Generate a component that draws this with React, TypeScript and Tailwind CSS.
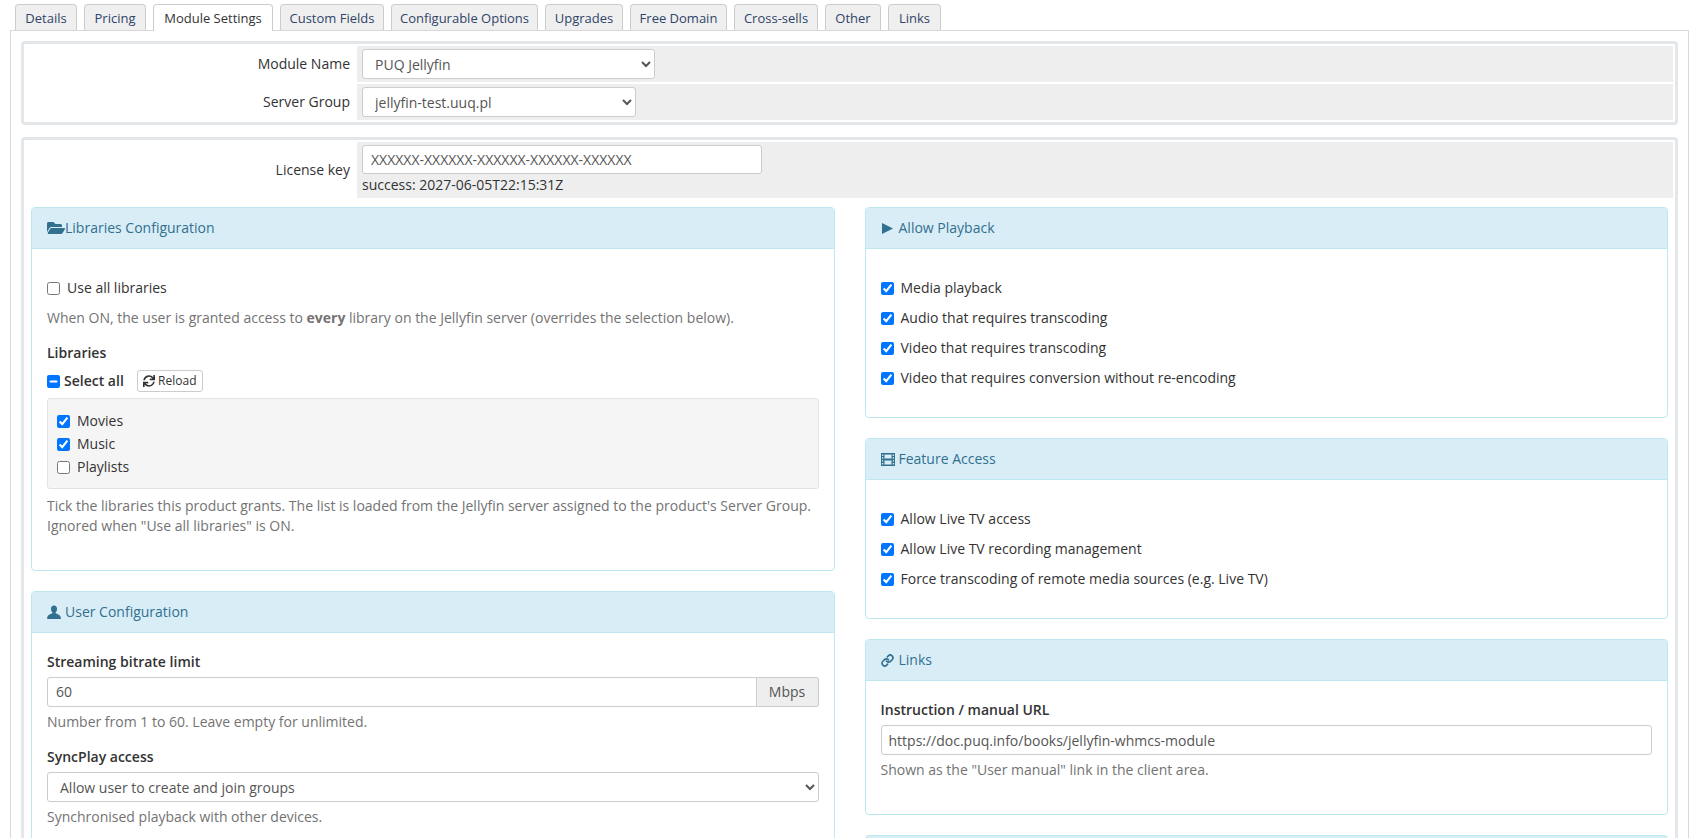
import { ReactNode } from "react";
import { FaFolderOpen, FaSync } from "react-icons/fa";
import { Link } from "lucide-react";

const tabs = [
  { label: "Details", width: "w-[62px]" },
  { label: "Pricing", width: "w-[62px]" },
  { label: "Module Settings", width: "w-[120px]", active: true },
  { label: "Custom Fields", width: "w-[104px]" },
  { label: "Configurable Options", width: "w-[147px]" },
  { label: "Upgrades", width: "w-[78px]" },
  { label: "Free Domain", width: "w-[97px]" },
  { label: "Cross-sells", width: "w-[84px]" },
  { label: "Other", width: "w-[56px]" },
  { label: "Links", width: "w-[53px]" },
];

function UserIcon() {
  return (
    <svg viewBox="0 0 14 14" className="size-[14px]" fill="currentColor">
      <path d="M7 .5C5 .5 4 2 4 3.9c0 1.4.6 2.6 1.4 3.3v1C3.5 9 .5 10 .2 12.5V14h13.6v-1.5C13.5 10 10.5 9 8.6 8.2v-1C9.4 6.5 10 5.3 10 3.9 10 2 9 .5 7 .5z" />
    </svg>
  );
}

function PlayIcon() {
  return (
    <svg viewBox="0 0 11 11" className="ml-px size-[11px]" fill="currentColor">
      <polygon points="0,0 11,5.5 0,11" />
    </svg>
  );
}

function FilmIcon() {
  return (
    <svg viewBox="0 0 14 13" className="h-[13px] w-[14px]" fill="currentColor" fillRule="evenodd">
      <path d="M0 0h14v13H0zM3.5 1.5v4h7v-4zM3.5 7.5v4h7v-4zM1 1.5v1.4h1.3V1.5zM1 4.3v1.4h1.3V4.3zM1 7.2v1.4h1.3V7.2zM1 10v1.4h1.3V10zM11.7 1.5v1.4H13V1.5zM11.7 4.3v1.4H13V4.3zM11.7 7.2v1.4H13V7.2zM11.7 10v1.4H13V10z" />
    </svg>
  );
}

function SettingRow({ label, children }: { label: string; children: ReactNode }) {
  return (
    <div className="flex">
      <div className="flex w-[331px] shrink-0 items-center justify-end pr-[7px]">{label}</div>
      <div className="flex-1 bg-[#eeeeee] px-[5px] py-[3px]">{children}</div>
    </div>
  );
}

function Panel({
  icon,
  title,
  children,
  className,
}: {
  icon: ReactNode;
  title: string;
  children: ReactNode;
  className?: string;
}) {
  return (
    <div className="mb-5 rounded border border-[#bce8f1] bg-white">
      <div className="flex h-[41px] items-center gap-1 rounded-t-[3px] border-b border-[#bce8f1] bg-[#d9edf7] px-[15px] text-[#31708f]">
        <span className="flex w-[14px] shrink-0">{icon}</span>
        <span>{title}</span>
      </div>
      <div className={className}>{children}</div>
    </div>
  );
}

function Check({ label, checked }: { label: string; checked?: boolean }) {
  return (
    <label className="flex h-5 items-center gap-[7px]">
      <input type="checkbox" defaultChecked={checked} className="m-0 size-[13px] shrink-0" />
      <span>{label}</span>
    </label>
  );
}

function Help({ children }: { children: ReactNode }) {
  return <p className="text-[#737373]">{children}</p>;
}

export default function App() {
  return (
    <div className="h-screen overflow-hidden bg-white font-['Open_Sans',sans-serif] text-[14px] leading-5 text-[#333333]">
      <div className="flex gap-[7px] pl-[15px] pt-1 text-[13px]">
        {tabs.map((tab) => (
          <div
            key={tab.label}
            className={
              tab.active
                ? `${tab.width} relative z-10 -mb-px flex h-[27px] items-center justify-center rounded-t border border-b-0 border-[#cccccc] bg-white text-[#333333]`
                : `${tab.width} flex h-[26px] items-center justify-center rounded-t border border-b-0 border-[#cccccc] bg-[#efefef] text-[#2f4468]`
            }
          >
            {tab.label}
          </div>
        ))}
      </div>

      <div className="mx-[4px] ml-[10px] border border-[#d8d8d8] px-[10px] pt-[10px]">
        <div className="flex flex-col gap-[2px] rounded border-[3px] border-[#e3e7e9] p-[2px]">
          <SettingRow label="Module Name">
            <select defaultValue="puq" className="block h-[30px] w-[293px] rounded-[3px] border border-[#cccccc] bg-white px-2 text-[#555555]">
              <option value="puq">PUQ Jellyfin</option>
            </select>
          </SettingRow>
          <SettingRow label="Server Group">
            <select defaultValue="test" className="block h-[30px] w-[274px] rounded-[3px] border border-[#cccccc] bg-white px-2 text-[#555555]">
              <option value="test">jellyfin-test.uuq.pl</option>
            </select>
          </SettingRow>
        </div>

        <div className="mt-3 rounded border-[3px] border-[#e3e7e9]">
          <div className="p-[2px]">
            <SettingRow label="License key">
              <input
                readOnly
                value="XXXXXX-XXXXXX-XXXXXX-XXXXXX-XXXXXX"
                className="block h-[29px] w-[400px] rounded-[3px] border border-[#cccccc] bg-white px-2 text-[#555555]"
              />
              <div className="mt-px h-[20px]">success: 2027-06-05T22:15:31Z</div>
            </SettingRow>
          </div>

          <div className="mt-[7px] grid grid-cols-2 gap-[30px] px-[7px]">
            <div>
              <Panel
                icon={<FaFolderOpen className="size-[18px] shrink-0" />}
                title="Libraries Configuration"
                className="px-[15px] pb-[34px] pt-[29px]"
              >
                <Check label="Use all libraries" />
                <div className="mt-[10px]">
                  <Help>
                    When ON, the user is granted access to <b className="font-bold">every</b> library on the Jellyfin server (overrides the selection below).
                  </Help>
                </div>
                <div className="mt-[15px] font-semibold">Libraries</div>
                <div className="mt-[7px] flex h-[22px] items-center gap-[13px]">
                  <label className="flex items-center gap-[4px] font-semibold">
                    <input
                      type="checkbox"
                      ref={(el) => {
                        if (el) el.indeterminate = true;
                      }}
                      className="m-0 size-[13px]"
                    />
                    <span>Select all</span>
                  </label>
                  <div className="flex h-[22px] w-[66px] items-center justify-center gap-[3px] rounded-[3px] border border-[#cccccc] bg-white text-[12px]">
                    <FaSync className="size-[12px]" />
                    Reload
                  </div>
                </div>
                <div className="mt-[6px] rounded-[3px] border border-[#e3e3e3] bg-[#f5f5f5] px-[9px] pb-[11px] pt-[12px]">
                  <div className="flex flex-col gap-[3px]">
                    <Check label="Movies" checked />
                    <Check label="Music" checked />
                    <Check label="Playlists" />
                  </div>
                </div>
                <div className="mt-[7px]">
                  <Help>
                    Tick the libraries this product grants. The list is loaded from the Jellyfin server assigned to the product's Server Group.
                    <br />
                    Ignored when "Use all libraries" is ON.
                  </Help>
                </div>
              </Panel>

              <Panel
                icon={<UserIcon />}
                title="User Configuration"
                className="px-[15px] pb-[30px] pt-[19px]"
              >
                <div className="font-semibold">Streaming bitrate limit</div>
                <div className="mt-[5px] flex h-[30px]">
                  <input
                    readOnly
                    value="60"
                    className="min-w-0 flex-1 rounded-l-[3px] border border-[#cccccc] bg-white px-2 text-[#555555]"
                  />
                  <div className="flex w-[62px] items-center justify-center rounded-r-[3px] border border-l-0 border-[#cccccc] bg-[#eeeeee] text-[#555555]">
                    Mbps
                  </div>
                </div>
                <div className="mt-[5px]">
                  <Help>Number from 1 to 60. Leave empty for unlimited.</Help>
                </div>
                <div className="mt-[15px] font-semibold">SyncPlay access</div>
                <select defaultValue="all" className="mt-[5px] block h-[30px] w-full rounded-[3px] border border-[#cccccc] bg-white px-2 text-[#555555]">
                  <option value="all">Allow user to create and join groups</option>
                </select>
                <div className="mt-[5px]">
                  <Help>Synchronised playback with other devices.</Help>
                </div>
              </Panel>
            </div>

            <div>
              <Panel
                icon={<PlayIcon />}
                title="Allow Playback"
                className="flex flex-col gap-[10px] px-[15px] pb-[29px] pt-[29px]"
              >
                <Check label="Media playback" checked />
                <Check label="Audio that requires transcoding" checked />
                <Check label="Video that requires transcoding" checked />
                <Check label="Video that requires conversion without re-encoding" checked />
              </Panel>

              <Panel
                icon={<FilmIcon />}
                title="Feature Access"
                className="flex flex-col gap-[10px] px-[15px] pb-[29px] pt-[29px]"
              >
                <Check label="Allow Live TV access" checked />
                <Check label="Allow Live TV recording management" checked />
                <Check label="Force transcoding of remote media sources (e.g. Live TV)" checked />
              </Panel>

              <Panel
                icon={<Link className="size-[13px]" strokeWidth={3} />}
                title="Links"
                className="px-[15px] pb-[34px] pt-[19px]"
              >
                <div className="font-semibold">Instruction / manual URL</div>
                <input
                  readOnly
                  value="https://doc.puq.info/books/jellyfin-whmcs-module"
                  className="mt-[5px] block h-[30px] w-full rounded-[3px] border border-[#cccccc] bg-white px-[7px] text-[#555555]"
                />
                <div className="mt-[5px]">
                  <Help>Shown as the "User manual" link in the client area.</Help>
                </div>
              </Panel>

              <div className="h-[41px] rounded-t border border-[#bce8f1] bg-[#d9edf7]" />
            </div>
          </div>
        </div>
      </div>
    </div>
  );
}
